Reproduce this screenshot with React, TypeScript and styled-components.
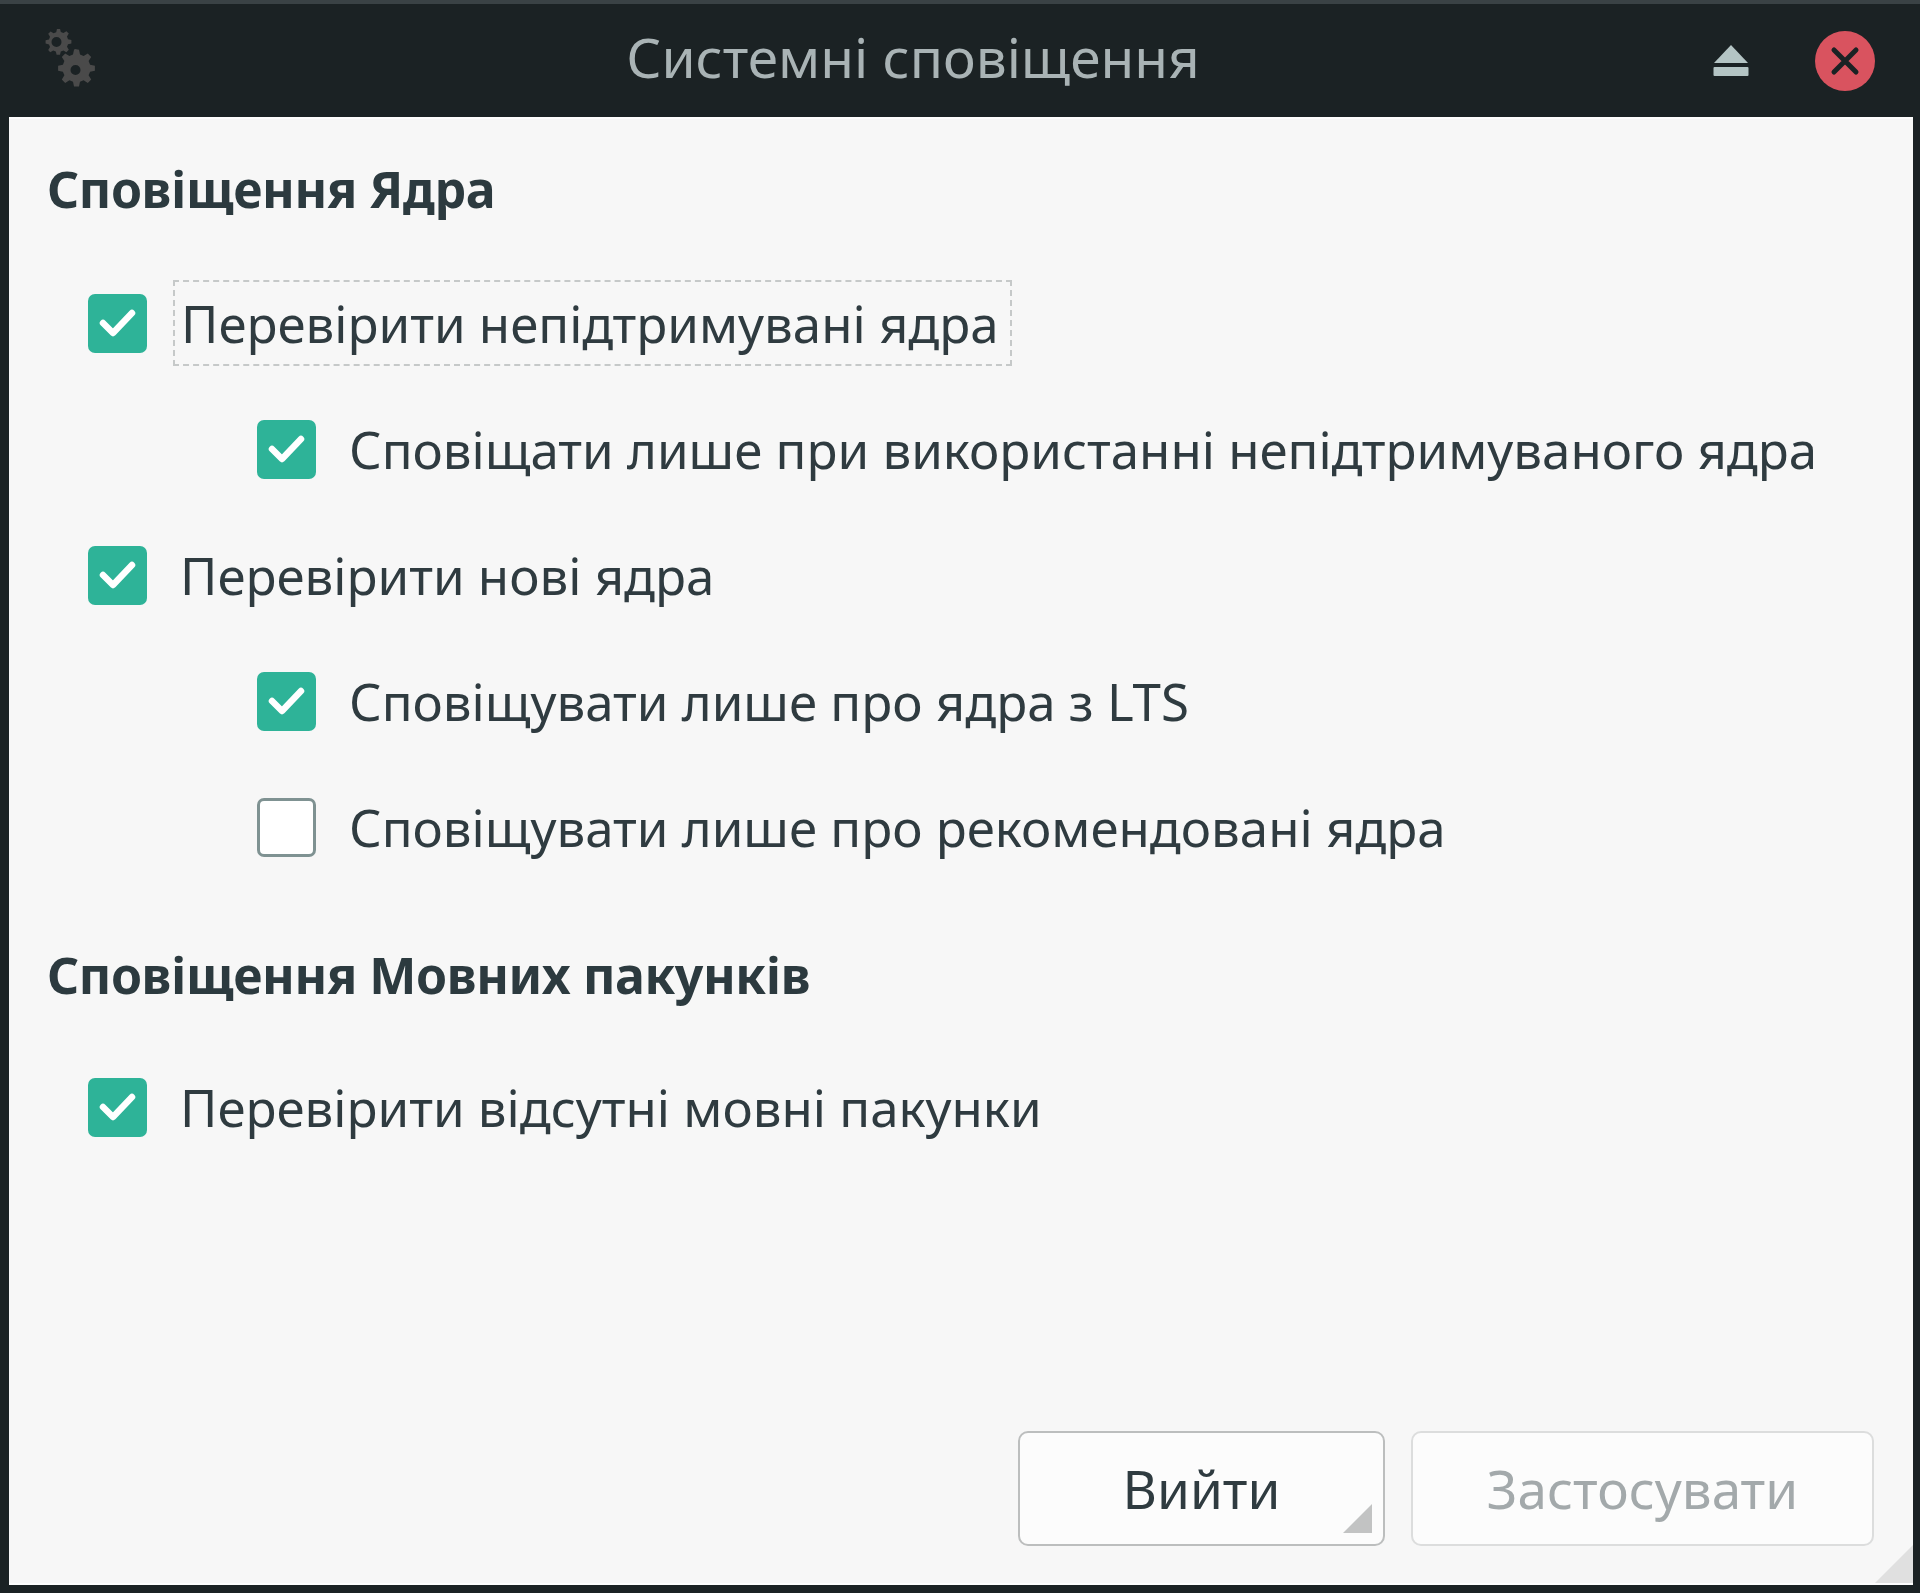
import React from 'react';
import styled, { createGlobalStyle } from 'styled-components';

const GlobalStyle = createGlobalStyle`
  html, body {
    margin: 0;
    padding: 0;
    background: #1b2224;
  }
`;

const Window = styled.div`
  width: 1920px;
  height: 1593px;
  box-sizing: border-box;
  display: flex;
  flex-direction: column;
  background: #1b2224;
  border-top: 4px solid #3a4245;
  font-family: 'Noto Sans', sans-serif;
  overflow: hidden;
  filter: blur(0.7px);
`;

const TitleBar = styled.header`
  height: 113px;
  flex: none;
  display: flex;
  align-items: center;
  position: relative;
  padding: 0 45px 0 44px;
`;

const Title = styled.div`
  position: absolute;
  left: 0;
  right: 0;
  top: 0;
  bottom: 8px;
  display: flex;
  align-items: center;
  justify-content: center;
  font-size: 55px;
  color: #a9b3b5;
  padding-right: 94px;
`;

const TitleButtons = styled.div`
  margin-left: auto;
  display: flex;
  align-items: center;
  gap: 66px;
`;

const Body = styled.main`
  flex: 1;
  margin: 0 7px 8px 9px;
  background: #f7f7f7;
  border-top: 2px solid #fdfdfd;
  border-bottom: 2px solid #fdfdfd;
  display: flex;
  flex-direction: column;
  padding: 36px 39px 37px 38px;
  position: relative;
`;

const SectionTitle = styled.h2<{ $gap?: number }>`
  margin: ${p => p.$gap ?? 0}px 0 0 0;
  font-size: 50px;
  line-height: 68px;
  font-weight: 700;
  color: #2c3a3f;
  letter-spacing: -0.4px;
`;

const Options = styled.div<{ $top: number }>`
  display: flex;
  flex-direction: column;
  gap: 42px;
  margin-top: ${p => p.$top}px;
`;

const Row = styled.label<{ $nested?: boolean }>`
  display: flex;
  align-items: center;
  height: 84px;
  margin-left: ${p => (p.$nested ? 210 : 41)}px;
`;

const Box = styled.span<{ $checked: boolean }>`
  width: 59px;
  height: 59px;
  flex: none;
  box-sizing: border-box;
  border-radius: 7px;
  display: flex;
  align-items: center;
  justify-content: center;
  background: ${p => (p.$checked ? '#2eb398' : '#ffffff')};
  border: ${p => (p.$checked ? 'none' : '3px solid #7f9292')};
`;

const Label = styled.span<{ $focused?: boolean }>`
  margin-left: ${p => (p.$focused ? 26 : 33)}px;
  padding: ${p => (p.$focused ? '0 11px 0 6px' : '0')};
  height: 82px;
  display: flex;
  align-items: center;
  font-size: 51px;
  color: #2f3b40;
  white-space: nowrap;
  border: ${p => (p.$focused ? '2px dashed #c6c9c9' : 'none')};
`;

const Footer = styled.footer`
  margin-top: auto;
  display: flex;
  justify-content: flex-end;
  gap: 26px;
`;

const Button = styled.button<{ $width: number }>`
  width: ${p => p.$width}px;
  height: 115px;
  box-sizing: border-box;
  border-radius: 10px;
  border: 2px solid ${p => (p.disabled ? '#dcdddd' : '#bcbebe')};
  background: #fcfcfc;
  color: ${p => (p.disabled ? '#a3a9ab' : '#2f3b40')};
  font-family: inherit;
  font-size: 53px;
  padding: 0;
  position: relative;
`;

const MenuMark = styled.span`
  position: absolute;
  right: 11px;
  bottom: 11px;
  width: 29px;
  height: 29px;
  background: #c2c3c3;
  clip-path: polygon(100% 0, 100% 100%, 0 100%);
`;

const Grip = styled.span`
  position: absolute;
  right: 0;
  bottom: 0;
  width: 38px;
  height: 38px;
  background: #e0e0e0;
  clip-path: polygon(100% 0, 100% 100%, 0 100%);
`;

const Gears = () => (
  <svg width="52" height="64" viewBox="0 0 52 64" fill="#4a4a4a">
    <path
      fillRule="evenodd"
      d="M14 0l3 .6.8 3.4 2.6 1 3-1.8 2.4 2.4-1.8 3 1 2.6 3.4.8v3.4l-3.4.8-1 2.6 1.8 3-2.4 2.4-3-1.8-2.6 1-.8 3.4h-3.4l-.8-3.4-2.6-1-3 1.8L5.2 22l1.8-3-1-2.6L2.6 15.6V12.2l3.4-.8 1-2.6-1.8-3 2.4-2.4 3 1.8 2.6-1 .8-3.4zM13.5 9a5 5 0 1 0 0 10 5 5 0 0 0 0-10z"
      transform="translate(-1 -1)"
    />
    <path
      fillRule="evenodd"
      d="M31 21l4 .8 1 4.8 3.6 1.5 4.2-2.6 3.4 3.4-2.6 4.2 1.5 3.6 4.8 1v5l-4.8 1-1.5 3.6 2.6 4.2-3.4 3.4-4.2-2.6-3.6 1.5-1 4.8h-5l-1-4.8-3.6-1.5-4.2 2.6-3.4-3.4 2.6-4.2-1.5-3.6-4.8-1v-5l4.8-1 1.5-3.6-2.6-4.2 3.4-3.4 4.2 2.6 3.6-1.5 1-4.8zM31.5 37a5 5 0 1 0 0 10 5 5 0 0 0 0-10z"
      transform="translate(0 -1)"
    />
  </svg>
);

const EjectIcon = () => (
  <svg width="36" height="34" viewBox="0 0 36 34" fill="#b4c4c4">
    <path d="M18 1 35 19H1z" />
    <rect x="0.5" y="23" width="35" height="9" rx="1" />
  </svg>
);

const CloseIcon = () => (
  <svg width="60" height="60" viewBox="0 0 60 60">
    <circle cx="30" cy="30" r="30" fill="#d9535f" />
    <path d="M19 19 41 41M41 19 19 41" stroke="#1b2224" strokeWidth="5" strokeLinecap="round" />
  </svg>
);

const Check = () => (
  <svg width="38" height="30" viewBox="0 0 38 30" fill="none">
    <path d="M4 15 14 25 33 5" stroke="#ffffff" strokeWidth="6.5" strokeLinecap="round" strokeLinejoin="round" />
  </svg>
);

const Option: React.FC<{ text: string; checked?: boolean; nested?: boolean; focused?: boolean }> = ({
  text,
  checked = true,
  nested,
  focused,
}) => (
  <Row $nested={nested}>
    <Box $checked={checked}>{checked && <Check />}</Box>
    <Label $focused={focused}>{text}</Label>
  </Row>
);

export default function App() {
  return (
    <>
      <GlobalStyle />
      <Window>
        <TitleBar>
          <Gears />
          <Title>Системні сповіщення</Title>
          <TitleButtons>
            <EjectIcon />
            <CloseIcon />
          </TitleButtons>
        </TitleBar>
        <Body>
          <SectionTitle>Сповіщення Ядра</SectionTitle>
          <Options $top={58}>
            <Option text="Перевірити непідтримувані ядра" focused />
            <Option text="Сповіщати лише при використанні непідтримуваного ядра" nested />
            <Option text="Перевірити нові ядра" />
            <Option text="Сповіщувати лише про ядра з LTS" nested />
            <Option text="Сповіщувати лише про рекомендовані ядра" nested checked={false} />
          </Options>
          <SectionTitle $gap={72}>Сповіщення Мовних пакунків</SectionTitle>
          <Options $top={56}>
            <Option text="Перевірити відсутні мовні пакунки" />
          </Options>
          <Footer>
            <Button $width={367}>
              Вийти
              <MenuMark />
            </Button>
            <Button $width={463} disabled>
              Застосувати
            </Button>
          </Footer>
          <Grip />
        </Body>
      </Window>
    </>
  );
}
